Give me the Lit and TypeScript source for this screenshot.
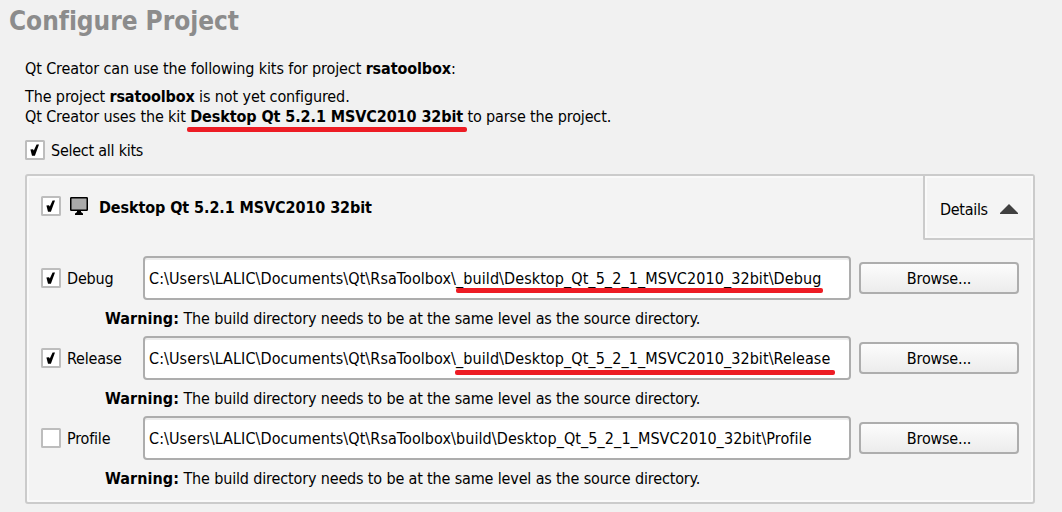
import { LitElement, html, css, svg } from "lit";

const KIT = "Desktop Qt 5.2.1 MSVC2010 32bit";
const ROOT = "C:\\Users\\LALIC\\Documents\\Qt\\RsaToolbox\\";

interface Build { name: string; path: string; checked: boolean; mark: string }

const BUILDS: Build[] = [
  { name: "Debug", path: "_build\\Desktop_Qt_5_2_1_MSVC2010_32bit\\Debug", checked: true, mark: "m-debug" },
  { name: "Release", path: "_build\\Desktop_Qt_5_2_1_MSVC2010_32bit\\Release", checked: true, mark: "m-release" },
  { name: "Profile", path: "build\\Desktop_Qt_5_2_1_MSVC2010_32bit\\Profile", checked: false, mark: "" },
];

class CheckBox extends LitElement {
  static properties = { checked: { type: Boolean } };
  declare checked: boolean;
  static styles = css`
    :host { display: block; width: 20px; height: 20px; flex: none; }
    svg { display: block; }
  `;
  render() {
    return html`<svg width="20" height="20" viewBox="0 0 20 20">
      <rect x="1" y="1" width="18" height="18" rx=".5" fill="#fff" stroke="#bdbdbd" stroke-width="2"/>
      ${this.checked ? svg`<path d="M5.4 9.6 L8 9.2 L8.8 10.6 L11.6 4.4 L14 4.4 L9.9 15.8 L7 15.8 Z" fill="#000"/>` : ""}
    </svg>`;
  }
}
customElements.define("check-box", CheckBox);

class AppRoot extends LitElement {
  static styles = css`
    :host {
      display: block; box-sizing: border-box; width: 1062px; height: 512px; overflow: hidden;
      background: #f1f1f1; color: #000;
      font: 16px/20px "DejaVu Sans Condensed", "DejaVu Sans", sans-serif;
      white-space: nowrap; padding: 6px 27px 0 25px;
    }
    h1 { margin: 0 0 23px -16px; font-size: 26px; line-height: 30px; letter-spacing: -.04px; color: #8c8c8c; }
    p { margin: 0; letter-spacing: -.12px; }
    .gap { margin-bottom: 8px; }
    .kit { position: relative; letter-spacing: -.09px; }
    .tail { letter-spacing: -.14px; }
    .mark { position: absolute; height: 5px; border-radius: 2px; background: #ed1c24; }
    .m-kit { left: -3px; right: -4px; top: 20px; }
    .m-debug { left: 0; right: -2px; top: 19px; }
    .m-release { left: -1px; right: -5px; top: 21px; }
    .all { display: flex; align-items: center; gap: 6px; height: 20px; margin-top: 13px; letter-spacing: -.25px; }
    .all span, .name, .details span { padding-top: 2px; }
    .panel {
      box-sizing: border-box; width: 1010px; height: 330px; margin-top: 14px;
      border: 2px solid #cbcbcb; border-radius: 3px; background: #f3f3f3;
      box-shadow: inset 0 0 0 2px #f9f9f9;
    }
    .head { display: flex; height: 64px; align-items: flex-start; }
    .title { display: flex; align-items: center; flex: 1; height: 20px; padding: 20px 0 0 14px; font-weight: bold; letter-spacing: -.09px; }
    .title svg { margin: 0 11px 0 9px; }
    .title span { padding-top: 4px; }
    .details {
      box-sizing: border-box; width: 110px; height: 64px; padding: 3px 15px 0 15px;
      display: flex; align-items: center; justify-content: space-between;
      border-left: 2px solid #cbcbcb; border-bottom: 2px solid #cbcbcb; border-bottom-left-radius: 2px;
      background: #f4f4f4; box-shadow: inset 2px 2px #fafafa, inset -2px -2px #f8f8f8; letter-spacing: -.3px;
    }
    .rows { padding: 16px 14px 0 14px; }
    .row { display: grid; grid-template-columns: 20px 70px 708px 162px; column-gap: 6px; align-items: center; height: 44px; }
    .name { letter-spacing: -.2px; }
    .field {
      box-sizing: border-box; height: 44px; padding: 11px 4px 9px; border: 2px solid #adadad; border-radius: 4px;
      background: #fff; box-shadow: inset 0 2px #ececec; letter-spacing: .08px;
    }
    .path { position: relative; }
    .browse {
      box-sizing: border-box; height: 32px; width: 160px; margin-left: 2px; padding: 5px 0 3px;
      border: 2px solid #adadad; border-radius: 4px; text-align: center; letter-spacing: -.2px;
      background: linear-gradient(#fcfcfc, #ececec);
    }
    .warn { height: 36px; padding: 9px 0 0 64px; box-sizing: border-box; letter-spacing: -.15px; }
    .warn b { letter-spacing: .05px; }
  `;
  render() {
    return html`
      <h1>Configure Project</h1>
      <p class="gap">Qt Creator can use the following kits for project <b>rsatoolbox</b>:</p>
      <p>The project <b>rsatoolbox</b> is not yet configured.</p>
      <p>Qt Creator uses the kit <b class="kit">${KIT}<i class="mark m-kit"></i></b><span class="tail"> to parse the project.</span></p>
      <div class="all"><check-box checked></check-box><span>Select all kits</span></div>
      <section class="panel">
        <div class="head">
          <div class="title"><check-box checked></check-box><svg width="18" height="18" viewBox="0 0 18 18">
              <rect x=".75" y=".75" width="16.5" height="12.5" rx=".6" fill="#ababab" stroke="#000" stroke-width="1.5"/>
              <path d="M7 13h4v2l2 1.5V18H5v-1.5L7 15z"/></svg><span>${KIT}</span></div>
          <div class="details"><span>Details</span><svg width="18" height="10" viewBox="0 0 18 10"><path d="M9 0L18 9V10H0V9z" fill="#404040"/></svg></div>
        </div>
        <div class="rows">
          ${BUILDS.map((b) => html`
            <div class="row">
              <check-box ?checked=${b.checked}></check-box>
              <span class="name">${b.name}</span>
              <div class="field">${ROOT}<span class="path">${b.path}${b.mark ? html`<i class="mark ${b.mark}"></i>` : ""}</span></div>
              <div class="browse">Browse...</div>
            </div>
            <div class="warn"><b>Warning:</b> The build directory needs to be at the same level as the source directory.</div>`)}
        </div>
      </section>`;
  }
}
customElements.define("app-root", AppRoot);
